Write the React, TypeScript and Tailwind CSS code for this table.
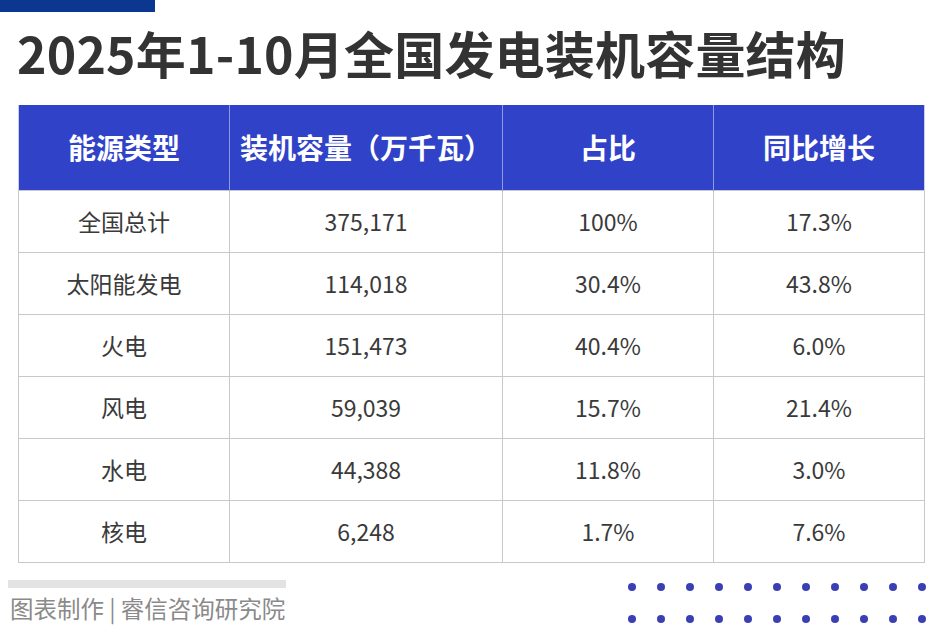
const rows = [
    ["全国总计", "375,171", "100%", "17.3%"],
    ["太阳能发电", "114,018", "30.4%", "43.8%"],
    ["火电", "151,473", "40.4%", "6.0%"],
    ["风电", "59,039", "15.7%", "21.4%"],
    ["水电", "44,388", "11.8%", "3.0%"],
    ["核电", "6,248", "1.7%", "7.6%"],
];

const headers = ["能源类型", "装机容量（万千瓦）", "占比", "同比增长"];
const colWidths = ["w-[211px]", "w-[273px]", "w-[211px]", "w-[211px]"];

const font = {
    fontFamily: '"Noto Sans CJK SC", "Noto Sans", sans-serif',
};

const App = () => {
    return (
        <div
            className="w-[942px] h-[640px] bg-white overflow-hidden flex flex-col"
            style={font}
        >
            <div className="w-[155px] h-[12px] bg-[#0b3790] shrink-0" />

            <h1 className="pl-[17px] mt-[12px] h-[56px] text-[50px] leading-[56px] font-bold text-[#333333] tracking-[0.2px]">
                2025年1-10月全国发电装机容量结构
            </h1>

            <div className="pl-[18px] mt-[25px]">
                <table className="border-collapse table-fixed w-[906px]">
                    <thead>
                        <tr className="bg-[#2f42c8] h-[85px]">
                            {headers.map((h, i) => (
                                <th
                                    key={h}
                                    className={`${colWidths[i]} text-white text-[28px] font-bold border-x border-[#8f9ae3] first:border-l-[#c9cdea] last:border-r-[#c9cdea]`}
                                >
                                    {h}
                                </th>
                            ))}
                        </tr>
                    </thead>
                    <tbody>
                        {rows.map((r) => (
                            <tr key={r[0]} className="h-[62px]">
                                {r.map((c, i) => (
                                    <td
                                        key={i}
                                        className="border border-[#c8c8c8] text-center text-[23px] text-[#3a3a3a]"
                                    >
                                        {c}
                                    </td>
                                ))}
                            </tr>
                        ))}
                    </tbody>
                </table>
            </div>

            <div className="flex justify-between mt-[17px] pl-[8px] pr-[16px]">
                <div className="flex flex-col">
                    <div className="w-[278px] h-[8px] bg-[#e3e3e3]" />
                    <div className="mt-[5px] pl-[2px] text-[23.5px] leading-[31px] text-[#8a8a8a] whitespace-pre">
                        图表制作 | 睿信咨询研究院
                    </div>
                </div>
                <div className="grid grid-cols-11 gap-x-[21px] gap-y-[23px] mt-[3px]">
                    {Array.from({ length: 22 }).map((_, i) => (
                        <div
                            key={i}
                            className="w-[8px] h-[8px] rounded-full bg-[#3a3fb3]"
                        />
                    ))}
                </div>
            </div>
        </div>
    );
};

export default App;
